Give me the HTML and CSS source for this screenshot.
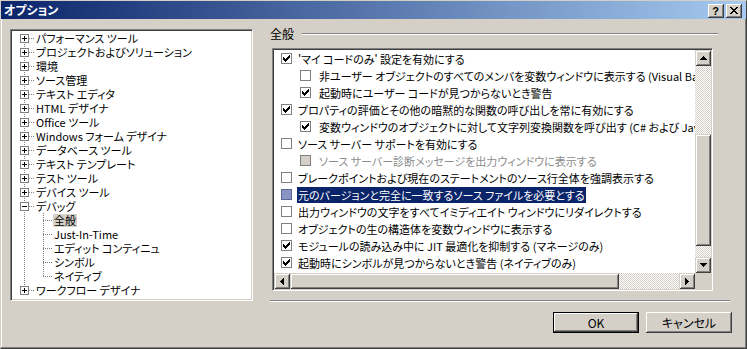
FILE: index.html
```html
<!DOCTYPE html>
<html lang="ja">
<head>
<meta charset="utf-8">
<link rel="stylesheet" href="styles.css">
</head>
<body>
<div class="window">
  <div class="titlebar">
    <span class="title">オプション</span>
    <div class="tb-buttons">
      <div class="tbtn help">?</div>
      <div class="tbtn close"><svg width="8" height="7" viewBox="0 0 8 7"><path d="M0 0h2v1H0zM6 0h2v1H6zM1 1h2v1H1zM5 1h2v1H5zM2 2h4v1H2zM3 3h2v1H3zM2 4h4v1H2zM1 5h2v1H1zM5 5h2v1H5zM0 6h2v1H0zM6 6h2v1H6z" fill="#000"/></svg></div>
    </div>
  </div>
  <div class="main">
    <div class="tree">
      <div class="tree-items">
        <div class="trow"><svg class="exp" width="9" height="9" viewBox="0 0 9 9"><rect x=".5" y=".5" width="8" height="8" fill="#fff" stroke="#808080"/><path d="M2 4h5v1H2zM4 2h1v5H4z" fill="#000"/></svg><span class="hline"></span><span class="tt">パフォーマンス ツール</span></div>
        <div class="trow"><svg class="exp" width="9" height="9" viewBox="0 0 9 9"><rect x=".5" y=".5" width="8" height="8" fill="#fff" stroke="#808080"/><path d="M2 4h5v1H2zM4 2h1v5H4z" fill="#000"/></svg><span class="hline"></span><span class="tt">プロジェクトおよびソリューション</span></div>
        <div class="trow"><svg class="exp" width="9" height="9" viewBox="0 0 9 9"><rect x=".5" y=".5" width="8" height="8" fill="#fff" stroke="#808080"/><path d="M2 4h5v1H2zM4 2h1v5H4z" fill="#000"/></svg><span class="hline"></span><span class="tt">環境</span></div>
        <div class="trow"><svg class="exp" width="9" height="9" viewBox="0 0 9 9"><rect x=".5" y=".5" width="8" height="8" fill="#fff" stroke="#808080"/><path d="M2 4h5v1H2zM4 2h1v5H4z" fill="#000"/></svg><span class="hline"></span><span class="tt">ソース管理</span></div>
        <div class="trow"><svg class="exp" width="9" height="9" viewBox="0 0 9 9"><rect x=".5" y=".5" width="8" height="8" fill="#fff" stroke="#808080"/><path d="M2 4h5v1H2zM4 2h1v5H4z" fill="#000"/></svg><span class="hline"></span><span class="tt">テキスト エディタ</span></div>
        <div class="trow"><svg class="exp" width="9" height="9" viewBox="0 0 9 9"><rect x=".5" y=".5" width="8" height="8" fill="#fff" stroke="#808080"/><path d="M2 4h5v1H2zM4 2h1v5H4z" fill="#000"/></svg><span class="hline"></span><span class="tt">HTML デザイナ</span></div>
        <div class="trow"><svg class="exp" width="9" height="9" viewBox="0 0 9 9"><rect x=".5" y=".5" width="8" height="8" fill="#fff" stroke="#808080"/><path d="M2 4h5v1H2zM4 2h1v5H4z" fill="#000"/></svg><span class="hline"></span><span class="tt">Office ツール</span></div>
        <div class="trow"><svg class="exp" width="9" height="9" viewBox="0 0 9 9"><rect x=".5" y=".5" width="8" height="8" fill="#fff" stroke="#808080"/><path d="M2 4h5v1H2zM4 2h1v5H4z" fill="#000"/></svg><span class="hline"></span><span class="tt">Windows フォーム デザイナ</span></div>
        <div class="trow"><svg class="exp" width="9" height="9" viewBox="0 0 9 9"><rect x=".5" y=".5" width="8" height="8" fill="#fff" stroke="#808080"/><path d="M2 4h5v1H2zM4 2h1v5H4z" fill="#000"/></svg><span class="hline"></span><span class="tt">データベース ツール</span></div>
        <div class="trow"><svg class="exp" width="9" height="9" viewBox="0 0 9 9"><rect x=".5" y=".5" width="8" height="8" fill="#fff" stroke="#808080"/><path d="M2 4h5v1H2zM4 2h1v5H4z" fill="#000"/></svg><span class="hline"></span><span class="tt">テキスト テンプレート</span></div>
        <div class="trow"><svg class="exp" width="9" height="9" viewBox="0 0 9 9"><rect x=".5" y=".5" width="8" height="8" fill="#fff" stroke="#808080"/><path d="M2 4h5v1H2zM4 2h1v5H4z" fill="#000"/></svg><span class="hline"></span><span class="tt">テスト ツール</span></div>
        <div class="trow"><svg class="exp" width="9" height="9" viewBox="0 0 9 9"><rect x=".5" y=".5" width="8" height="8" fill="#fff" stroke="#808080"/><path d="M2 4h5v1H2zM4 2h1v5H4z" fill="#000"/></svg><span class="hline"></span><span class="tt">デバイス ツール</span></div>
        <div class="trow"><svg class="exp" width="9" height="9" viewBox="0 0 9 9"><rect x=".5" y=".5" width="8" height="8" fill="#fff" stroke="#808080"/><path d="M2 4h5v1H2z" fill="#000"/></svg><span class="hline"></span><span class="tt">デバッグ</span></div>
        <div class="trow child"><span class="hline long"></span><span class="tt sel">全般</span></div>
        <div class="trow child"><span class="hline long"></span><span class="tt">Just-In-Time</span></div>
        <div class="trow child"><span class="hline long"></span><span class="tt">エディット コンティニュ</span></div>
        <div class="trow child"><span class="hline long"></span><span class="tt">シンボル</span></div>
        <div class="trow child last"><span class="hline long"></span><span class="tt">ネイティブ</span></div>
        <div class="trow"><svg class="exp" width="9" height="9" viewBox="0 0 9 9"><rect x=".5" y=".5" width="8" height="8" fill="#fff" stroke="#808080"/><path d="M2 4h5v1H2zM4 2h1v5H4z" fill="#000"/></svg><span class="hline"></span><span class="tt">ワークフロー デザイナ</span></div>
      </div>
    </div>
    <div class="right">
      <div class="group-head"><span class="lbl">全般</span><div class="etch"></div></div>
      <div class="listbox">
        <div class="rows">
          <div class="row"><span class="cb"><svg width="9" height="9" viewBox="0 0 9 9"><path d="M1 3h1v3H1zM2 4h1v3H2zM3 5h1v3H3zM4 4h1v3H4zM5 3h1v3H5zM6 2h1v3H6zM7 1h1v3H7z" fill="#000"/></svg></span><span class="txt">'マイ コードのみ' 設定を有効にする</span></div>
          <div class="row sub"><span class="cb"></span><span class="txt">非ユーザー オブジェクトのすべてのメンバを変数ウィンドウに表示する (Visual Basic のみ)</span></div>
          <div class="row sub"><span class="cb"><svg width="9" height="9" viewBox="0 0 9 9"><path d="M1 3h1v3H1zM2 4h1v3H2zM3 5h1v3H3zM4 4h1v3H4zM5 3h1v3H5zM6 2h1v3H6zM7 1h1v3H7z" fill="#000"/></svg></span><span class="txt">起動時にユーザー コードが見つからないとき警告</span></div>
          <div class="row"><span class="cb"><svg width="9" height="9" viewBox="0 0 9 9"><path d="M1 3h1v3H1zM2 4h1v3H2zM3 5h1v3H3zM4 4h1v3H4zM5 3h1v3H5zM6 2h1v3H6zM7 1h1v3H7z" fill="#000"/></svg></span><span class="txt">プロパティの評価とその他の暗黙的な関数の呼び出しを常に有効にする</span></div>
          <div class="row sub"><span class="cb"><svg width="9" height="9" viewBox="0 0 9 9"><path d="M1 3h1v3H1zM2 4h1v3H2zM3 5h1v3H3zM4 4h1v3H4zM5 3h1v3H5zM6 2h1v3H6zM7 1h1v3H7z" fill="#000"/></svg></span><span class="txt">変数ウィンドウのオブジェクトに対して文字列変換関数を呼び出す (C# および JavaScript のみ)</span></div>
          <div class="row"><span class="cb"></span><span class="txt">ソース サーバー サポートを有効にする</span></div>
          <div class="row sub disabled"><span class="cb"></span><span class="txt">ソース サーバー診断メッセージを出力ウィンドウに表示する</span></div>
          <div class="row"><span class="cb"></span><span class="txt">ブレークポイントおよび現在のステートメントのソース行全体を強調表示する</span></div>
          <div class="row selected"><span class="cb"></span><span class="txt">元のバージョンと完全に一致するソース ファイルを必要とする</span></div>
          <div class="row"><span class="cb"></span><span class="txt">出力ウィンドウの文字をすべてイミディエイト ウィンドウにリダイレクトする</span></div>
          <div class="row"><span class="cb"></span><span class="txt">オブジェクトの生の構造体を変数ウィンドウに表示する</span></div>
          <div class="row"><span class="cb"><svg width="9" height="9" viewBox="0 0 9 9"><path d="M1 3h1v3H1zM2 4h1v3H2zM3 5h1v3H3zM4 4h1v3H4zM5 3h1v3H5zM6 2h1v3H6zM7 1h1v3H7z" fill="#000"/></svg></span><span class="txt">モジュールの読み込み中に JIT 最適化を抑制する (マネージのみ)</span></div>
          <div class="row"><span class="cb"><svg width="9" height="9" viewBox="0 0 9 9"><path d="M1 3h1v3H1zM2 4h1v3H2zM3 5h1v3H3zM4 4h1v3H4zM5 3h1v3H5zM6 2h1v3H6zM7 1h1v3H7z" fill="#000"/></svg></span><span class="txt">起動時にシンボルが見つからないとき警告 (ネイティブのみ)</span></div>
        </div>
        <div class="vscroll">
          <div class="sbtn"><svg width="7" height="4" viewBox="0 0 7 4"><path d="M3 0h1v1H3zM2 1h3v1H2zM1 2h5v1H1zM0 3h7v1H0z" fill="#000"/></svg></div>
          <div class="vgap-top"></div>
          <div class="thumb vthumb"></div>
          <div class="fill"></div>
          <div class="sbtn"><svg width="7" height="4" viewBox="0 0 7 4"><path d="M0 0h7v1H0zM1 1h5v1H1zM2 2h3v1H2zM3 3h1v1H3z" fill="#000"/></svg></div>
        </div>
        <div class="hscroll">
          <div class="sbtn"><svg width="4" height="7" viewBox="0 0 4 7"><path d="M0 3h1v1H0zM1 2h1v3H1zM2 1h1v5H2zM3 0h1v7H3z" fill="#000"/></svg></div>
          <div class="thumb hthumb"></div>
          <div class="fill"></div>
          <div class="sbtn"><svg width="4" height="7" viewBox="0 0 4 7"><path d="M0 0h1v7H0zM1 1h1v5H1zM2 2h1v3H2zM3 3h1v1H3z" fill="#000"/></svg></div>
        </div>
        <div class="corner"></div>
      </div>
      <div class="sep"></div>
      <div class="buttons">
        <div class="btn default">OK</div>
        <div class="btn">キャンセル</div>
      </div>
    </div>
  </div>
</div>
</body>
</html>
```

FILE: styles.css
```css
* { box-sizing: border-box; }
body {
  margin: 0;
  font-family: "Noto Sans CJK JP", "Liberation Sans", sans-serif;
  font-size: 11px;
  font-feature-settings: "palt";
  color: #000;
}
.window {
  width: 747px;
  height: 349px;
  background: #d4d0c8;
  border-top: 1px solid #d4d0c8;
  border-left: 1px solid #d4d0c8;
  border-right: 1px solid #404040;
  border-bottom: 1px solid #404040;
  box-shadow: inset -1px -1px #808080, inset 1px 1px #fff;
  display: flex;
  flex-direction: column;
}
.titlebar {
  height: 18px;
  flex: none;
  display: flex;
  justify-content: space-between;
  align-items: center;
  padding: 0 4px 0 3px;
  background: linear-gradient(to right, #0a246a, #a6caf0);
  color: #fff;
}
.title {
  font-weight: bold;
  font-size: 12px;
  line-height: 18px;
}
.tb-buttons {
  display: flex;
  gap: 2px;
  align-self: flex-end;
  margin-bottom: 1px;
}
.tbtn {
  width: 16px;
  height: 14px;
  background: #d4d0c8;
  box-shadow: inset -1px -1px #404040, inset 1px 1px #fff, inset -2px -2px #808080;
  display: flex;
  align-items: center;
  justify-content: center;
  color: #000;
}
.help {
  font-family: "Liberation Sans", sans-serif;
  font-weight: bold;
  font-size: 11px;
  line-height: 14px;
  padding-right: 1px;
}
.close svg { display: block; margin-top: -1px; margin-left: -1px; }

.main {
  flex: 1;
  display: flex;
  padding: 8px 0 0 9px;
}
.tree {
  margin-top: 2px;
  width: 243px;
  height: 272px;
  background: #fff;
  border: 1px solid;
  border-color: #808080 #fff #fff #808080;
  box-shadow: inset 1px 1px #404040, inset -1px -1px #d4d0c8;
  padding: 1px;
}
.tree-items {
  background: repeating-linear-gradient(to bottom, #808080 0 1px, transparent 1px 2px) 12px 7px / 1px 252px no-repeat;
}
.trow {
  height: 14px;
  display: flex;
  align-items: center;
  padding-left: 8px;
  white-space: nowrap;
}
.exp { display: block; flex: none; }
.hline {
  flex: none;
  width: 5px;
  height: 1px;
  background: repeating-linear-gradient(to right, #808080 0 1px, transparent 1px 2px);
}
.hline.long { width: 9px; }
.tt {
  line-height: 13px;
  height: 13px;
  padding: 0 1px;
  margin-left: 1px;
}
.trow.child {
  padding-left: 31px;
  background: repeating-linear-gradient(to bottom, #808080 0 1px, transparent 1px 2px) 31px 0 / 1px 14px no-repeat;
}
.trow.child.last {
  background-size: 1px 7px;
}
.trow.child .tt { margin-left: 1px; }
.tt.sel { background: #d4d0c8; }

.right {
  margin-left: 17px;
  width: 462px;
  display: flex;
  flex-direction: column;
}
.group-head {
  height: 14px;
  display: flex;
  align-items: center;
}
.lbl { line-height: 14px; margin-right: 8px; font-size: 12px; }
.etch {
  flex: 1;
  margin-right: 14px;
  height: 2px;
  border-top: 1px solid #808080;
  border-bottom: 1px solid #fff;
}
.listbox {
  margin: 7px 0 0 2px;
  width: 441px;
  height: 243px;
  border: 1px solid;
  border-color: #808080 #fff #fff #808080;
  box-shadow: inset 1px 1px #404040, inset -1px -1px #d4d0c8;
  padding: 1px;
  display: grid;
  grid-template-columns: 1fr 16px;
  grid-template-rows: 1fr 16px;
}
.rows {
  background: #fff;
  overflow: hidden;
  min-width: 0;
}
.row {
  height: 17px;
  display: flex;
  align-items: center;
  padding-left: 7px;
  white-space: nowrap;
}
.row.sub { padding-left: 26px; }
.cb {
  flex: none;
  width: 11px;
  height: 11px;
  border: 1px solid #808080;
  background: #fff;
  margin-right: 5px;
  display: flex;
  align-items: center;
  justify-content: center;
}
.cb svg { display: block; }
.row.sub .cb { margin-right: 7px; }
.txt {
  line-height: 16px;
  height: 16px;
  padding: 0 1px;
}
.row.disabled .cb { background: #d4d0c8; }
.row.disabled .txt { color: #8c8c8c; }
.row.selected .cb { background: #8a93c2; border-color: #5a6598; }
.row.selected .txt { background: #0a246a; color: #fff; }

.vscroll, .hscroll {
  display: flex;
  background-color: #fff;
  background-image: repeating-conic-gradient(#d4d0c8 0 25%, #fff 0 50%);
  background-size: 2px 2px;
}
.vscroll { flex-direction: column; }
.sbtn, .thumb {
  flex: none;
  background: #d4d0c8;
  box-shadow: inset 1px 1px #d4d0c8, inset -1px -1px #404040, inset 2px 2px #fff, inset -2px -2px #808080;
}
.sbtn {
  width: 16px;
  height: 16px;
  display: flex;
  align-items: center;
  justify-content: center;
}
.sbtn svg { display: block; }
.vgap-top { height: 68px; flex: none; }
.vthumb { height: 112px; width: 16px; }
.hthumb { width: 329px; height: 16px; }
.fill { flex: 1; }
.corner { background: #d4d0c8; }

.sep {
  margin-top: 9px;
  width: 460px;
  height: 2px;
  border-top: 1px solid #808080;
  border-bottom: 1px solid #fff;
}
.buttons {
  margin-top: 10px;
  display: flex;
  justify-content: flex-end;
  gap: 7px;
}
.btn {
  width: 86px;
  height: 21px;
  background: #d4d0c8;
  box-shadow: inset -1px -1px #404040, inset 1px 1px #fff, inset -2px -2px #808080;
  display: flex;
  align-items: center;
  justify-content: center;
  line-height: 16px;
  font-size: 12px;
}
.btn.default {
  border: 1px solid #000;
}
```
